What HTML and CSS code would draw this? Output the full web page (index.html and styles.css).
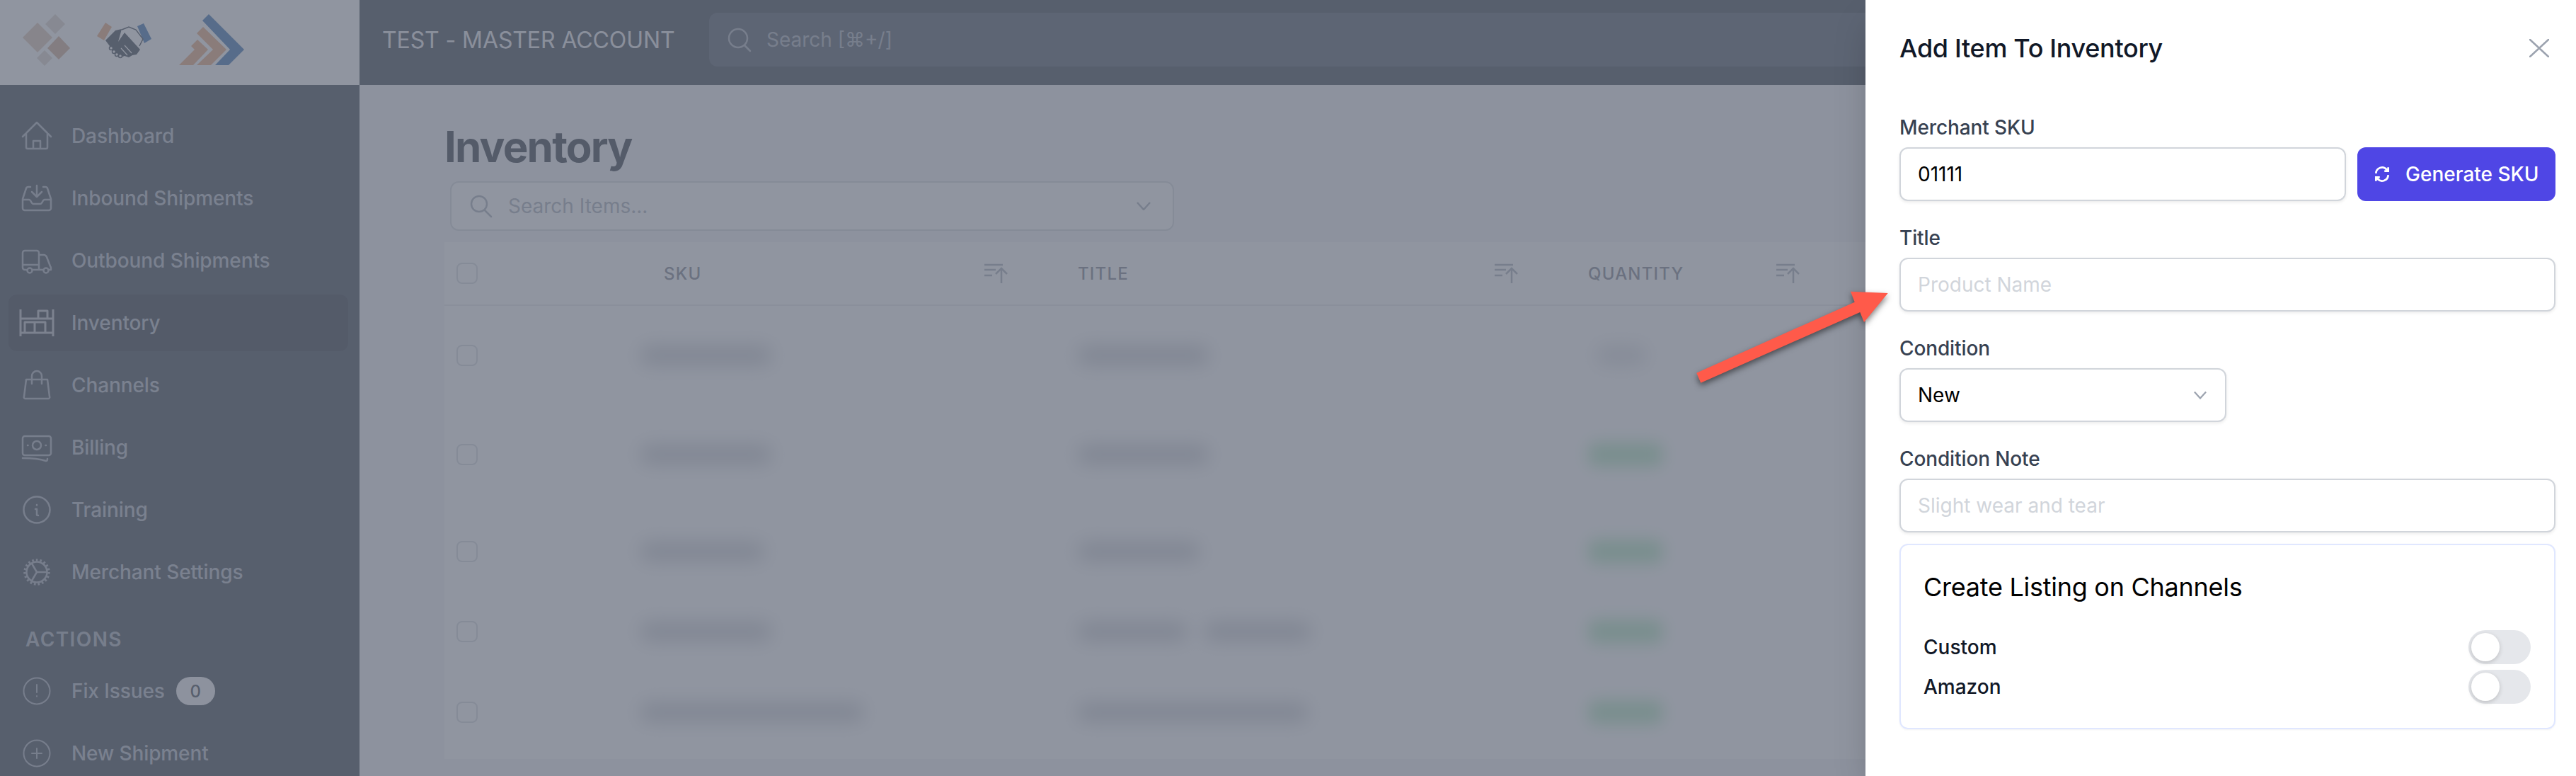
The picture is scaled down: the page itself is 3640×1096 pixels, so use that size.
FILE: index.html
```html
<!DOCTYPE html>
<html lang="en">
<head>
<meta charset="utf-8">
<title>Inventory</title>
<link rel="stylesheet" href="styles.css">
</head>
<body>
<div class="app">
  <aside class="sidebar">
    <div class="logo">
      <svg class="logo-art" viewBox="0 0 380 120" width="380" height="120">
        <polygon class="tan" points="53,32 74,53 53,74 32,53"/>
        <polygon class="tan-pale" points="78,20 92,34 78,48 64,34"/>
        <polygon class="tan-dark" points="83,51 99,68 83,84 67,68"/>
        <polygon class="tan-pale" points="63,71 74,82 63,93 52,82"/>
        <polygon class="brown" points="149,32 158,38 147,57 137,51"/>
        <polygon class="steel" points="194,37 203,33 214,55 204,61"/>
        <path class="hand-line" d="M172 42 182 38 192 42 202 55 197 65"/>
        <path class="hands" d="M149 57 163 43 172 41 167 59 176 46 198 70 193 77 187 78 182 81 176 79 171 81 165 78 160 72 155 65Z"/>
        <path class="finger-gap" d="M176 64 186 75M171 68 180 78"/>
        <circle class="finger" cx="157" cy="68" r="2.500"/>
        <circle class="finger" cx="161" cy="73" r="2.500"/>
        <circle class="finger" cx="165" cy="77" r="2.500"/>
        <circle class="finger" cx="170" cy="79" r="2.500"/>
        <polygon class="steel" points="295,20 345,70 323,92 304,92 325,70 286,29"/>
        <polygon class="brown" points="287,38 320,70 298,92 278,92 301,70 278,47"/>
        <polygon class="brown" points="279,56 294,70 273,92 253,92 275,70 270,65"/>
      </svg>
    </div>
    <nav class="nav">
      <a class="nav-item"><svg class="nav-icon" viewBox="0 0 44 44"><path d="M2 23 22 3l20 20M7 18v20a2 2 0 0 0 2 2h26a2 2 0 0 0 2-2V18M17 40V29h10v11"/></svg><span>Dashboard</span></a>
      <a class="nav-item"><svg class="nav-icon" viewBox="0 0 44 44"><path d="M2 23v13a3 3 0 0 0 3 3h34a3 3 0 0 0 3-3V23M2 23 7 8a3 3 0 0 1 3-2h3M42 23 37 8a3 3 0 0 0-3-2h-3M2 24h9c3 0 3 6 6 6h10c3 0 3-6 6-6h9M22 4v16M15 13l7 7 7-7"/></svg><span>Inbound Shipments</span></a>
      <a class="nav-item"><svg class="nav-icon" viewBox="0 0 44 44"><path d="M8 35H5a3 3 0 0 1-3-3V11a3 3 0 0 1 3-3h17a3 3 0 0 1 3 3v24h-9M2 28h23M25 14h7c2 0 3 1 4 3l5 13a4 4 0 0 1 1 3v2h-3M25 35h6"/><circle cx="12" cy="36" r="3.500"/><circle cx="35" cy="36" r="3.500"/></svg><span>Outbound Shipments</span></a>
      <a class="nav-item active"><svg class="nav-icon shelf" viewBox="0 0 44 44"><path d="M-1 3v38M45 3v38M-1 16h46M-1 36h46M24 16V5h13v11M5 36V21h29v15M19 21v15"/></svg><span>Inventory</span></a>
      <a class="nav-item"><svg class="nav-icon" viewBox="0 0 44 44"><path d="M7 14h30l3 24a2 2 0 0 1-2 3H6a2 2 0 0 1-2-3ZM15 20V9a7 7 0 0 1 14 0v11"/></svg><span>Channels</span></a>
      <a class="nav-item"><svg class="nav-icon" viewBox="0 0 44 44"><rect x="2" y="6" width="40" height="27" rx="3"/><circle cx="22" cy="19" r="6"/><path d="M9 19h.5M34.500 19h.5M2 37c12 0 24 1 33 4 1 0 2-1 2-3"/></svg><span>Billing</span></a>
      <a class="nav-item"><svg class="nav-icon" viewBox="0 0 44 44"><circle cx="22" cy="22" r="18.500"/><path d="M22 15v.5M20 21h2v8c0 1 1 1 2 1"/></svg><span>Training</span></a>
      <a class="nav-item"><svg class="nav-icon" viewBox="0 0 44 44"><circle cx="22" cy="22" r="14.500"/><circle class="teeth" cx="22" cy="22" r="17"/><path d="M22 22 15 10M22 22h14M22 22 15 34"/></svg><span>Merchant Settings</span></a>
    </nav>
    <h2 class="nav-heading">ACTIONS</h2>
    <nav class="nav">
      <a class="nav-item"><svg class="nav-icon thin" viewBox="0 0 44 44"><circle cx="22" cy="22" r="18.500"/><path d="M22 13v11M22 29v.5"/></svg><span>Fix Issues</span><span class="badge">0</span></a>
      <a class="nav-item"><svg class="nav-icon thin" viewBox="0 0 44 44"><circle cx="22" cy="22" r="18.500"/><path d="M22 15v14M15 22h14"/></svg><span>New Shipment</span></a>
    </nav>
  </aside>

  <div class="main">
    <header class="topbar">
      <div class="account">TEST - MASTER ACCOUNT</div>
      <div class="global-search">
        <svg class="search-icon" viewBox="0 0 32 32"><circle cx="14" cy="14" r="13"/><path d="m23 24 8 8"/></svg>
        <span>Search [⌘+/]</span>
      </div>
    </header>
    <main class="content">
      <h1 class="page-title">Inventory</h1>
      <div class="item-search">
        <svg class="search-icon dim" viewBox="0 0 32 32"><circle cx="13" cy="13" r="11"/><path d="m21 22 9 9"/></svg>
        <span>Search Items...</span>
        <svg class="chev" viewBox="0 0 20 12"><path d="m1 1 9 10 9-10"/></svg>
      </div>
      <section class="table">
        <div class="row head">
          <div class="cell"><span class="check"></span></div>
          <div class="cell th first">SKU<svg class="sort" viewBox="0 0 32 30"><path d="M1 3h26M1 10h16M1 18h11M25 29V8M17 16l8-8 8 8"/></svg></div>
          <div class="cell th">TITLE<svg class="sort" viewBox="0 0 32 30"><path d="M1 3h26M1 10h16M1 18h11M25 29V8M17 16l8-8 8 8"/></svg></div>
          <div class="cell th">QUANTITY<svg class="sort" viewBox="0 0 32 30"><path d="M1 3h26M1 10h16M1 18h11M25 29V8M17 16l8-8 8 8"/></svg></div>
        </div>
        <div class="row tall">
          <div class="cell"><span class="check"></span></div>
          <div class="cell"><i class="blur" style="width:185px"></i></div>
          <div class="cell"><i class="blur" style="width:185px"></i></div>
          <div class="cell"><i class="blur pale" style="width:70px"></i></div>
        </div>
        <div class="row tall">
          <div class="cell"><span class="check"></span></div>
          <div class="cell"><i class="blur" style="width:185px"></i></div>
          <div class="cell"><i class="blur" style="width:185px"></i></div>
          <div class="cell"><i class="blur green"></i></div>
        </div>
        <div class="row mid">
          <div class="cell"><span class="check"></span></div>
          <div class="cell"><i class="blur" style="width:175px"></i></div>
          <div class="cell"><i class="blur" style="width:172px"></i></div>
          <div class="cell"><i class="blur green"></i></div>
        </div>
        <div class="row short">
          <div class="cell"><span class="check"></span></div>
          <div class="cell"><i class="blur" style="width:185px"></i></div>
          <div class="cell"><i class="blur" style="width:155px"></i><i class="blur gap" style="width:150px"></i></div>
          <div class="cell"><i class="blur green"></i></div>
        </div>
        <div class="row mid">
          <div class="cell"><span class="check"></span></div>
          <div class="cell"><i class="blur" style="width:315px"></i></div>
          <div class="cell"><i class="blur" style="width:325px"></i></div>
          <div class="cell"><i class="blur green"></i></div>
        </div>
      </section>
    </main>
  </div>
</div>

<div class="overlay"></div>

<aside class="panel">
  <div class="panel-head">
    <h2 class="panel-title">Add Item To Inventory</h2>
    <svg class="close" viewBox="0 0 28 26"><path d="m1 1 26 24M27 1 1 25"/></svg>
  </div>
  <form class="form">
    <div class="field">
      <label class="label">Merchant SKU</label>
      <div class="sku-row">
        <input class="input" value="01111">
        <button class="btn" type="button">
          <svg class="btn-icon" viewBox="0 0 24 24"><path d="M4 11a8 8 0 0 1 14-5l2 2M20 3v5h-5M20 13a8 8 0 0 1-14 5l-2-2M4 21v-5h5"/></svg>
          Generate SKU
        </button>
      </div>
    </div>
    <div class="field">
      <label class="label">Title</label>
      <input class="input" placeholder="Product Name">
    </div>
    <div class="field">
      <label class="label">Condition</label>
      <div class="input select"><span>New</span><svg class="select-chev" viewBox="0 0 20 12"><path d="m1 1 9 10 9-10"/></svg></div>
    </div>
    <div class="field">
      <label class="label">Condition Note</label>
      <input class="input" placeholder="Slight wear and tear">
    </div>
    <section class="card">
      <h3 class="card-title">Create Listing on Channels</h3>
      <div class="toggle-row"><span>Custom</span><span class="toggle"><span class="knob"></span></span></div>
      <div class="toggle-row"><span>Amazon</span><span class="toggle"><span class="knob"></span></span></div>
    </section>
  </form>
</aside>

<svg class="arrow" viewBox="2390 405 285 145" width="285" height="145">
  <polygon points="2397.300,526.700 2620.700,426.700 2615,411.700 2667.700,414 2634,455 2628.300,441 2403.300,540.700"/>
</svg>
</body>
</html>
```

FILE: styles.css
```css
* { box-sizing: border-box; }
html, body { margin: 0; height: 100%; }
body {
  width: 3640px;
  height: 1096px;
  overflow: hidden;
  position: relative;
  font-family: Inter, "Liberation Sans", sans-serif;
  background: #f3f4f6;
}
.app { display: grid; grid-template-columns: 508px 1fr; height: 1096px; overflow: hidden; }

/* Sidebar */
.sidebar { background: #1f2937; color: #a9afbb; overflow: hidden; }
.logo { height: 120px; background: #fff; }
.logo-art { display: block; }
.tan { fill: #dcc0aa; }
.tan-pale { fill: #d9cfc8; }
.tan-dark { fill: #cc9e82; }
.brown { fill: #e69a68; }
.steel { fill: #1e5ea8; }
.hands { fill: #1f2937; }
.hand-line { fill: none; stroke: #1f2937; stroke-width: 1.500; }
.finger { fill: #fff; stroke: #1f2937; stroke-width: 1.500; }
.finger-gap { fill: none; stroke: #fff; stroke-width: 1.200; }
.nav { display: flex; flex-direction: column; gap: 8px; padding: 0 16px 0 12px; }
.sidebar > .nav:first-of-type { padding-top: 32px; }
.nav-item { display: flex; align-items: center; height: 80px; padding-left: 18px; border-radius: 12px; font-size: 28px; font-weight: 500; letter-spacing: -.1px; }
.nav-item.active { background: #111827; color: #a9afbb; }
.nav-icon { width: 44px; height: 44px; margin-right: 27px; flex: none; overflow: visible; fill: none; stroke: #9ca3af; stroke-width: 2.500; stroke-linecap: round; stroke-linejoin: round; }
.nav-icon.shelf { stroke-width: 3; stroke-linecap: butt; stroke: #aeb3bd; }
.nav-icon.thin { stroke-width: 2; }
.teeth { stroke-dasharray: 2.600 3; stroke-width: 3.500; stroke-linecap: butt; }
.nav-heading { margin: 35px 0 13px 36px; font-size: 28px; line-height: 40px; font-weight: 600; letter-spacing: .05em; color: #9ca3af; }
.badge { margin-left: 16px; width: 55px; height: 40px; border-radius: 20px; background: #f3f4f6; color: #1f2937; font-size: 24px; display: flex; align-items: center; justify-content: center; }

/* Top bar */
.main { min-width: 0; overflow: hidden; }
.topbar { height: 120px; background: #1f2937; display: flex; align-items: center; padding: 0 0 8px 32px; }
.account { width: 462px; flex: none; font-size: 32px; letter-spacing: -.1px; color: #e5e7eb; white-space: nowrap; }
.global-search { flex: 1; height: 76px; background: #374151; border-radius: 12px 0 0 12px; display: flex; align-items: center; gap: 22px; padding-left: 27px; font-size: 28px; color: #9ca3af; }
.search-icon { width: 32px; height: 32px; flex: none; fill: none; stroke: #9ca3af; stroke-width: 2.500; overflow: visible; stroke-linecap: round; }

/* Content */
.content { padding: 51px 0 0 120px; }
.page-title { margin: 0; font-size: 60px; line-height: 72px; font-weight: 700; letter-spacing: -.03em; color: #111827; }
.item-search { margin: 13px 0 0 8px; width: 1023px; height: 70px; background: #fff; border: 2px solid #d1d5db; border-radius: 12px; display: flex; align-items: center; gap: 22px; padding: 0 31px 0 26px; font-size: 28px; color: #9ca3af; }
.item-search .chev { margin-left: auto; }
.chev { width: 20px; height: 12px; fill: none; stroke: #9ca3af; stroke-width: 2.500; }
.table { margin-top: 16px; background: #fff; }
.row { display: grid; grid-template-columns: 277px 618px 721px 398px 1fr; align-items: center; height: 140px; }
.row.head { height: 90px; border-bottom: 2px solid #e5e7eb; }
.row.mid { height: 133px; }
.row.short { height: 94px; }
.cell { display: flex; align-items: center; min-width: 0; }
.check { display: block; width: 30px; height: 30px; margin-left: 17px; border: 2px solid #d1d5db; border-radius: 8px; background: #fff; }
.th { font-size: 24px; font-weight: 500; letter-spacing: .05em; color: #6b7280; padding-right: 101px; }
.th.first { padding-left: 33px; }
.sort { margin-left: auto; width: 32px; height: 30px; fill: none; stroke: #9ca3af; stroke-width: 2.500; overflow: visible; }
.blur { display: block; height: 28px; border-radius: 12px; background: #c3c5cb; filter: blur(13px); }
.blur.pale { margin-left: 12px; background: #d6d8dc; }
.blur.gap { margin-left: 24px; }
.blur.green { width: 106px; height: 34px; background: #a6e4b6; filter: blur(11px); }

/* Overlay */
.overlay { position: absolute; inset: 0; background: rgba(107, 114, 128, .75); }

/* Slide-over */
.panel { position: absolute; top: 0; right: 0; bottom: 0; width: 1004px; padding: 40px 29px 0 48px; background: #fff; box-shadow: 0 25px 50px -12px rgba(0, 0, 0, .25); }
.panel-head { display: flex; justify-content: space-between; align-items: center; height: 56px; margin-bottom: 64px; }
.panel-title { margin: 0; font-size: 36px; line-height: 56px; font-weight: 500; letter-spacing: -.33px; color: #111827; }
.close { width: 28px; height: 26px; margin-right: 9px; fill: none; stroke: #9ca3af; stroke-width: 2.500; stroke-linecap: round; }
.form { display: flex; flex-direction: column; }
.field { display: flex; flex-direction: column; gap: 8px; margin-bottom: 32px; }
.field:nth-child(4) { margin-bottom: 16px; }
.label { font-size: 28px; line-height: 40px; font-weight: 500; letter-spacing: -.12px; color: #374151; }
.input { width: 100%; height: 76px; padding: 0 24px; border: 2px solid #d1d5db; border-radius: 12px; background: #fff; box-shadow: 0 2px 4px rgba(0, 0, 0, .08); font: 400 28px Inter, "Liberation Sans", sans-serif; color: #000; outline: none; }
.input::placeholder { color: #d1d5db; opacity: 1; }
.sku-row { display: flex; gap: 16px; }
.sku-row .input { flex: 1; min-width: 0; }
.btn { flex: none; width: 280px; height: 76px; display: flex; align-items: center; gap: 20px; padding: 0 0 0 22px; border: 0; border-radius: 12px; background: #4f46e5; color: #fff; font: 500 28px Inter, "Liberation Sans", sans-serif; white-space: nowrap; }
.btn-icon { width: 26px; height: 26px; flex: none; fill: none; stroke: #fff; stroke-width: 2.500; overflow: visible; }
.select { width: 462px; display: flex; align-items: center; justify-content: space-between; }
.select-chev { width: 18px; height: 12px; margin-right: 2px; fill: none; stroke: #9ca3af; stroke-width: 2.500; }
.card { height: 262px; padding: 31px 33px 0 32px; border: 2px solid #e0e7ff; border-radius: 12px; box-shadow: 0 1px 3px rgba(0, 0, 0, .05); }
.card-title { margin: 0 0 33px; font-size: 36px; line-height: 56px; font-weight: 400; letter-spacing: -.27px; color: #000; }
.toggle-row { display: flex; justify-content: space-between; align-items: center; height: 48px; margin-bottom: 8px; font-size: 28px; font-weight: 500; color: #111827; }
.toggle { display: block; width: 88px; height: 48px; padding: 4px; border-radius: 24px; background: #e5e7eb; }
.knob { display: block; width: 40px; height: 40px; border-radius: 50%; background: #fff; box-shadow: 0 2px 6px rgba(0, 0, 0, .18); }

/* Annotation arrow */
.arrow { position: absolute; left: 2390px; top: 405px; overflow: visible; fill: #ff5a4a; filter: drop-shadow(0 4px 4px rgba(0, 0, 0, .5)); }
```
